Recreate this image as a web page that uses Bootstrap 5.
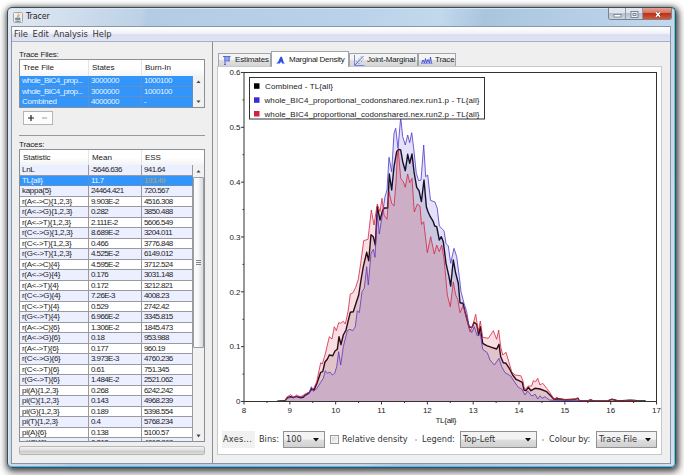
<!DOCTYPE html>
<html lang="en">
<head>
  <meta charset="utf-8">
  <title>Tracer</title>
  <meta name="viewport" content="width=device-width, initial-scale=1">
  <link href="https://cdn.jsdelivr.net/npm/bootstrap@5.3.0/dist/css/bootstrap.min.css" rel="stylesheet">

  <style>
    body {
      width: 684px;
      height: 475px;
      background: #fff;
      font-family: "Liberation Sans", Arial, sans-serif;
      font-size: 8px;
      line-height: 1;
      color: #222;
      letter-spacing: -.2px;
      white-space: nowrap;
    }
    .ui-font {
      font-family: "DejaVu Sans", Verdana, sans-serif;
      font-size: 8.2px;
      letter-spacing: 0;
      color: #333;
    }
    /* window frame */
    .win {
      width: 669px;
      height: 461px;
      margin: 7px 0 0 7px;
      padding: 0 4px 3px 3px;
      border: 1px solid #3f4c56;
      border-bottom-color: #28586f;
      border-radius: 5px;
      background: linear-gradient(100deg, #e2e9f1 0, #c9d9ea 12%, #bdd1e7 18%, #b3cbe3 19%, #b9d1e9 45%, #c2d8ec 58%, #a9c5de 64%, #b9d1e8 80%, #cfe0ee 100%);
      box-shadow: inset -1px 0 0 #55cbe0, inset 0 -1px 0 #62b4dc, inset 1px 0 0 #d9e8f3, inset 0 1px 0 #d6e5f3, 1px 1px 5px 1px rgba(0,0,0,.5), 1px 3px 8px 2px rgba(0,0,0,.45);
    }
    .title-row { height: 18px; padding-left: 2px; }
    .title-row .caption { font-family: "DejaVu Sans", sans-serif; font-size: 8px; margin-left: 3px; letter-spacing: -.15px; color: #222; }
    .win-btns {
      height: 12px;
      width: 64px;
      margin-right: -1px;
      border: 1px solid #77838f;
      border-top: 0;
      border-radius: 0 0 3px 3px;
      overflow: hidden;
    }
    .win-btns div { width: 17px; background: linear-gradient(#dfe6ee 0 45%, #b4c1cf 50%, #cad6e2); border-right: 1px solid #8d99a6; }
    .win-btns .x-btn { width: 28px; border: 0; background: linear-gradient(#e3a294 0, #d27562 45%, #bd3117 50%, #d4583c); }
    .client { height: 438px; border: 1px solid #8b94a2; background: #efefef; }
    .menu-row {
      height: 15px;
      flex: none;
      padding-left: 2px;
      font-size: 8.4px;
      background: linear-gradient(#fff 0, #f1f3fa 45%, #dadff0 55%, #dfe3f3 100%);
      border-bottom: 1px solid #a9afc0;
    }
    .menu-row span { margin-right: 4.6px; }
    .content-row { height: 421px; }

    /* left side */
    .side { width: 201px; padding-left: 7px; border-right: 1px solid #8c8c8c; }
    .side .lbl { height: 9px; line-height: 9px; letter-spacing: -.15px; }
    .grid-box { width: 186px; border: 1px solid #8b8e94; background: #efefef; overflow: hidden; }
    .files-box { height: 49px; }
    .traces-box { height: 293px; }
    .grid-head { background: linear-gradient(#fff 50%, #f3f4f6); letter-spacing: -.05px; }
    .files-box .grid-head { height: 16px; }
    .traces-box .grid-head { height: 15px; }
    .grid-head div { padding-left: 3px; border-right: 1px solid #e2e4e8; }
    .c1 { width: 69px; }
    .c2 { width: 53px; }
    .c3 { width: 51px; }
    .grid-rows { width: 173px; overflow: hidden; }
    .grid-row { height: 10.52px; background: #fff; border-bottom: 1px solid #9a9a9e; }
    .grid-row div { padding-left: 2px; border-right: 1px solid #9a9a9e; line-height: 9.8px; letter-spacing: -.58px; color: #1c1c1c; }
    .grid-row .c1 { letter-spacing: -.3px; }
    .grid-row.odd-row { background: #ecefff; }
    .grid-row.sel { background: #3295fb; border-bottom-color: #5f91c8; }
    .grid-row.sel div { color: #e9f4ff; border-right-color: #5f91c8; }
    .files-box .grid-row div { letter-spacing: -.45px; }
    .files-box .grid-row .c1 { letter-spacing: -.55px; }
    .files-box .grid-row:last-child .c1 { letter-spacing: -.2px; }
    .grid-row.sel .warn { color: #b9a45c; }
    .bar-col { width: 11px; background: #f1f1f1; }
    .bar-thumb { height: 171px; margin-top: 3px; border: 1px solid #9b9ea2; border-radius: 1px; background: linear-gradient(90deg, #fafafa 40%, #d9dadc); }
    .pm { width: 30px; height: 14px; margin: 3px 0 0 4px; border: 1px solid #b4b4b4; background: #fdfdfd; }
    .rule { width: 186px; height: 1px; margin: 10px 0 4px; background: #999; }
    .progress-strip { width: 186px; height: 9px; margin-top: 4px; border: 1px solid #b4b6b8; border-radius: 2px; background: linear-gradient(#f4f4f4, #dcdcdc 50%, #c6c7c8 60%, #e0e0e0); }

    /* right side */
    .main { padding-left: 4px; }
    .tab-row { height: 24px; padding-left: 1px; }
    .tab-x { height: 13px; border: 1px solid #a2a4a8; border-bottom: 0; background: linear-gradient(#f4f4f4 45%, #dedfe0 55%, #d4d5d6); letter-spacing: -.14px; }
    .tab-x.on { height: 16px; background: #fff; margin-bottom: -1px; }
    .tab-x.on .cap { letter-spacing: -.26px; margin-left: -1px; }
    .panel { width: 445px; height: 389px; border: 1px solid #c6c8ca; background: #fff; }
    .plot { display: block; letter-spacing: 0; }
    .ctl { height: 17px; margin: 3px 0 0 4px; }
    .combo { height: 17px; border: 1px solid #8f9194; background: linear-gradient(#f3f3f3 48%, #dedede 52%, #d0d0d0); padding: 0 5px 0 2px; }
    .axes-btn { width: 33px; height: 17px; background: #f1f1f1; padding-left: 1px; letter-spacing: .25px; }
    .chk { width: 9px; height: 9px; margin: 0 3px 0 5px; border: 1px solid #999; background: linear-gradient(135deg, #cfcfcf, #fff); box-shadow: inset 0 0 0 1px #f4f4f4; }
    .dot { width: 2px; height: 2px; background: #ccc; }
    .w-bins { width: 42px; }
    .w-legend { width: 77px; margin-right: 5px; }
    .w-colour { width: 61px; }
    .t-bins { width: 24px; }
    .t-density { width: 73px; }
    .t-legend { width: 43px; padding-left: 5px; }
    .t-colour { width: 52px; padding-left: 5px; }
    .tab-1 { width: 53px; }
    .tab-2 { width: 78px; }
    .tab-3 { width: 69px; }
    .tab-4 { width: 38px; }
  </style>
</head>

<body class="overflow-hidden">
  <div class="win">
    <!-- title bar -->
    <div class="title-row d-flex justify-content-between">
      <div class="d-flex align-items-center">
        <svg width="10" height="11" viewBox="0 0 10 11">
          <rect x=".5" y=".5" width="9" height="10" rx="1" fill="#f2f0ea" stroke="#a5a8ab"/>
          <path d="M5.2 1.5c1.4 1.2-1.8 2-.3 3.8M6.6 3c-1 .6-1 1.2-.4 2" fill="none" stroke="#d98742" stroke-width=".9"/>
          <path d="M2.6 6h4v1.6q-2 1-4 0zM6.6 6.3q1.4 0 0 1.2M2 9.1q3 .8 6-.1" fill="#8ca0b8" stroke="#5a7596" stroke-width=".7"/>
        </svg>
        <span class="caption">Tracer</span>
      </div>
      <div class="win-btns d-flex">
        <div><svg class="d-block" width="16" height="12"><rect x="5" y="6.5" width="7" height="2.5" fill="#fff" stroke="#626c78" stroke-width=".7"/></svg></div>
        <div><svg class="d-block" width="16" height="12"><rect x="5" y="3.5" width="7" height="6" fill="#eef" stroke="#626c78" stroke-width=".8"/><rect x="7" y="5.5" width="3" height="2" fill="none" stroke="#626c78" stroke-width=".8"/></svg></div>
        <div class="x-btn"><svg class="d-block" width="28" height="12"><path d="M13 4.3l4 4.4M17 4.3l-4 4.4" stroke="#7b2a20" stroke-width="2.6"/><path d="M13 4.3l4 4.4M17 4.3l-4 4.4" stroke="#fff" stroke-width="1.6"/></svg></div>
      </div>
    </div>

    <div class="client">
      <div class="menu-row ui-font d-flex align-items-center">
        <span>File</span><span>Edit</span><span>Analysis</span><span>Help</span>
      </div>

      <div class="content-row d-flex">
        <!-- trace files and statistics -->
        <div class="side pt-2">
          <div class="lbl">Trace Files:</div>
          <div class="grid-box files-box">
            <div class="grid-head d-flex">
              <div class="c1 d-flex align-items-center">Tree File</div>
              <div class="c2 d-flex align-items-center">States</div>
              <div class="c3 d-flex align-items-center border-0">Burn-In</div>
            </div>
            <div class="d-flex">
              <div class="grid-rows" id="files"></div>
              <div class="bar-col d-flex flex-column justify-content-between align-items-center pt-1 pb-1">
                <svg width="5" height="4"><path d="M.5 3L2.5 .5L4.5 3z" fill="#444"/></svg>
                <svg width="5" height="4"><path d="M.5 .5L2.5 3L4.5 .5z" fill="#444"/></svg>
              </div>
            </div>
          </div>
          <div class="pm d-flex align-items-center justify-content-around">
            <svg width="6" height="6"><path d="M0 3h6M3 0v6" stroke="#222" stroke-width="1.2"/></svg>
            <svg width="6" height="6"><path d="M0 3h5" stroke="#999" stroke-width="1"/></svg>
          </div>
          <div class="rule"></div>
          <div class="lbl">Traces:</div>
          <div class="grid-box traces-box">
            <div class="grid-head d-flex">
              <div class="c1 d-flex align-items-center">Statistic</div>
              <div class="c2 d-flex align-items-center">Mean</div>
              <div class="c3 d-flex align-items-center border-0">ESS</div>
            </div>
            <div class="d-flex">
              <div class="grid-rows" id="traces"></div>
              <div class="bar-col">
                <svg class="d-block mx-auto mt-1" width="5" height="5"><path d="M.5 3.5L2.5 1L4.5 3.5z" fill="#444"/></svg>
                <div class="bar-thumb d-flex align-items-center justify-content-center">
                  <svg width="5" height="6"><path d="M0 .5h5M0 2.5h5M0 4.5h5" stroke="#777" stroke-width=".9"/></svg>
                </div>
                <svg class="d-block mx-auto" width="5" height="92"><path d="M.5 86.500L2.5 89.500L4.5 86.500z" fill="#444"/></svg>
              </div>
            </div>
          </div>
          <div class="progress-strip"></div>
        </div>

        <!-- tabs and chart -->
        <div class="main">
          <div class="tab-row d-flex align-items-end">
            <div class="tab-x tab-1 d-flex align-items-center">
              <svg class="ms-1 me-1" width="8" height="11" viewBox="0 0 8 11"><path d="M0 1.500h7.500M2 1.500v8M1 9.500h2M6 1.500v5" fill="none" stroke="#5265d8" stroke-width="1"/><rect x="2" y="1.500" width="4" height="4.500" fill="#93a4f0" stroke="#5265d8" stroke-width=".7"/></svg>
              <span class="cap">Estimates</span>
            </div>
            <div class="tab-x on tab-2 d-flex align-items-center">
              <svg class="ms-1 me-1" width="10" height="8" viewBox="0 0 10 8"><path d="M0 7.5Q2.2 7 3 4T5 .5T7 4T10 7.5H6.2L5 5.5L3.8 7.5z" fill="#2b50e4"/></svg>
              <span class="cap">Marginal Density</span>
            </div>
            <div class="tab-x tab-3 d-flex align-items-center">
              <svg class="ms-1" width="13" height="11" viewBox="0 0 13 11"><path d="M.5 0v10.500h10" fill="none" stroke="#7586e4"/><path d="M1 10L9.500 1" stroke="#4b60d8" stroke-width=".9"/><path d="M2.500 6.500h1M4.500 4h1M6.500 2h1M4.500 8.500h1M7 6.500h1M8.500 4h1" stroke="#7c8ce6" stroke-width="1"/></svg>
              <span class="cap">Joint-Marginal</span>
            </div>
            <div class="tab-x tab-4 d-flex align-items-center">
              <svg width="16" height="10" viewBox="0 0 16 10"><path d="M2.500 8.500L4 5L5.500 8L6.500 3.500L7.500 8L9 4.500L10.500 8L11.500 2L12.500 8.500" fill="none" stroke="#3a48d4" stroke-width=".9"/><path d="M2 8.500h11.500" stroke="#7c88e8" stroke-width=".8"/></svg>
              <span class="cap">Trace</span>
            </div>
          </div>

          <div class="panel">
            <svg class="plot" width="443" height="361" viewBox="218 67 443 361" font-family="Liberation Sans, Arial, sans-serif" font-size="8" fill="#222">
              <g id="curves" stroke-linejoin="round"></g>
              <rect x="244" y="72.500" width="412.500" height="329" fill="none" stroke="#333"/>
              <g id="axes"></g>
              <text x="446" y="423" text-anchor="middle" textLength="21">TL{all}</text>
              <!-- legend -->
              <rect x="249.500" y="77.500" width="235" height="41.500" fill="#fff" stroke="#333"/>
              <rect x="254" y="83.300" width="5.500" height="5.500" fill="#000"/>
              <rect x="254" y="97.300" width="5.500" height="5.500" fill="#3b2bd2"/>
              <rect x="254" y="111" width="5.500" height="5.500" fill="#d2213d"/>
              <text x="265" y="88.800" textLength="68">Combined - TL{all}</text>
              <text x="264.500" y="102.800" textLength="215">whole_BIC4_proportional_codonshared.nex.run1.p - TL{all}</text>
              <text x="264.500" y="116.500" textLength="215">whole_BIC4_proportional_codonshared.nex.run2.p - TL{all}</text>
            </svg>

            <div class="ctl ui-font d-flex align-items-center">
              <div class="axes-btn d-flex align-items-center me-1">Axes...</div>
              <div class="t-bins">Bins:</div>
              <div class="combo w-bins d-flex align-items-center justify-content-between">100 <svg width="6" height="4"><path d="M0 0h6L3 3.500z" fill="#111"/></svg></div>
              <div class="chk"></div>
              <div class="t-density">Relative density</div>
              <div class="dot"></div>
              <div class="t-legend">Legend:</div>
              <div class="combo w-legend d-flex align-items-center justify-content-between">Top-Left <svg width="6" height="4"><path d="M0 0h6L3 3.500z" fill="#111"/></svg></div>
              <div class="dot"></div>
              <div class="t-colour">Colour by:</div>
              <div class="combo w-colour d-flex align-items-center justify-content-between">Trace File <svg width="6" height="4"><path d="M0 0h6L3 3.500z" fill="#111"/></svg></div>
            </div>
          </div>
        </div>
      </div>
    </div>
  </div>

  <script src="https://cdn.jsdelivr.net/npm/bootstrap@5.3.0/dist/js/bootstrap.bundle.min.js"></script>
  <script>
    const files = [
      ["whole_BIC4_prop...", "3000000", "1000100"],
      ["whole_BIC4_prop...", "3000000", "1000100"],
      ["Combined", "4000000", "-"]
    ];
    const traces = [
      ["LnL", "-5646.636", "941.64"], ["TL{all}", "11.7", "193.49"], ["kappa{5}", "24464.421", "720.567"],
      ["r(A<->C){1,2,3}", "9.903E-2", "4516.308"], ["r(A<->G){1,2,3}", "0.282", "3850.488"],
      ["r(A<->T){1,2,3}", "2.111E-2", "5606.549"], ["r(C<->G){1,2,3}", "8.689E-2", "3204.011"],
      ["r(C<->T){1,2,3}", "0.466", "3776.848"], ["r(G<->T){1,2,3}", "4.525E-2", "6149.012"],
      ["r(A<->C){4}", "4.595E-2", "3712.524"], ["r(A<->G){4}", "0.176", "3031.148"],
      ["r(A<->T){4}", "0.172", "3212.821"], ["r(C<->G){4}", "7.26E-3", "4008.23"],
      ["r(C<->T){4}", "0.529", "2742.42"], ["r(G<->T){4}", "6.966E-2", "3345.815"],
      ["r(A<->C){6}", "1.306E-2", "1845.473"], ["r(A<->G){6}", "0.18", "953.988"],
      ["r(A<->T){6}", "0.177", "960.19"], ["r(C<->G){6}", "3.973E-3", "4760.236"],
      ["r(C<->T){6}", "0.61", "751.345"], ["r(G<->T){6}", "1.484E-2", "2521.062"],
      ["pi(A){1,2,3}", "0.268", "6242.242"], ["pi(C){1,2,3}", "0.143", "4968.239"],
      ["pi(G){1,2,3}", "0.189", "5398.554"], ["pi(T){1,2,3}", "0.4", "5768.234"],
      ["pi(A){6}", "0.138", "5100.57"], ["pi(C){6}", "0.313", "4817.868"]
    ];

    function fillRows(id, rows, isSelected) {
      const box = document.getElementById(id);
      rows.forEach((r, i) => {
        const row = document.createElement("div");
        row.className = "grid-row d-flex" + (isSelected(i) ? " sel" : i % 2 == 0 ? " odd-row" : "");
        r.forEach((value, c) => {
          const cell = document.createElement("div");
          cell.className = "c" + (c + 1) + (value == "193.49" ? " warn" : "");
          cell.textContent = value;
          row.appendChild(cell);
        });
        box.appendChild(row);
      });
    }
    fillRows("files", files, () => true);
    fillRows("traces", traces, i => i == 1);

    // density curves, in plot coordinates
    const tail = " 558.3,398.7 565,399.7 575,399.3 578,398.2 579.3,400.7 588.3,400.7 590.7,399.8 593.3,401 608.3,400.7 611.7,399.3 615.7,400.3 618.3,401 630,400.3 635,400.5 636.7,401";
    const combined = "277.3,401.3 285,400.7 287.3,397.7 290.7,396.7 293.3,397.7 296,396.3 300,397.7 303.3,397.3 305,395.3 309.3,392.7 311.3,388.7 314,390 316.7,384 320.7,372.3 322.7,371.7 325,362 327.3,359.3 329.3,355 332.7,355.7 335,351 337.3,349.3 339,336.7 341,344.7 343.3,335 346,330 348,321.7 350.3,312.3 353.3,311.7 356,303.3 358.7,295 361,280 363.3,266.7 366.7,252.3 368.7,260.7 371,234.7 373.3,236.7 375.3,245 377.3,206.7 380,220 382.7,210 384.3,208 387.7,208 389.3,174 391.7,190 394,166.7 396.7,151.7 398.7,149.3 400.7,150 402.7,161.7 405.3,170.7 407.7,154.3 409.7,163.3 412,154 414,171.7 416.7,187.3 419,190.7 421.4,201.5 424,180 426.4,207 428,211.7 430.3,216.7 433.3,221.7 434.7,226 436.7,226.7 439.3,240 441.3,236.7 443.3,241.7 446,263.3 449,276.7 450.7,286 453.3,260 455.7,273.3 458.3,283.3 460,302.7 463,303.3 465,311.7 467.7,321.7 469.3,327.3 472.3,326.9 474,322.3 476.7,324.3 478.7,335 480.3,326.7 482.7,343.3 486.7,345.7 491.7,347.3 496.7,349 499,344.3 500.7,356.7 503.3,362.7 506,363.3 509.3,368.3 512.7,375 516,379.3 519,380.7 522.3,382.3 524,390 526,390.7 528.3,387.3 531,390.7 535,388.3 540,389 546.7,391.7 551.7,396.7 554,399.3" + tail + " 645.7,401";
    const run1 = "285,400.9 287.3,398 296,396.700 305,396 309.3,393.3 311.3,386.7 313.3,391.3 316.7,388.7 320.7,382.3 323.3,378.3 325.3,370.7 327.3,373.3 330,372 332.3,375 334.7,373.3 336.7,366.7 338.7,351.7 340.7,365 343.3,346.7 347.3,330.7 350,329.3 352.7,330.7 355.3,326.7 357.3,310.7 359.3,312.7 362,291.7 364.3,288.3 366.7,266.7 368.3,285 371,253.3 373.3,249.3 375,257.3 377.3,213 379.3,234 382,216.7 385,196.7 387,190 389,157.3 391.7,171.7 394,133.3 395.7,128.3 398,148.3 400.7,117.3 402.7,136.7 405.3,145 407.7,135 409.7,142.7 411.7,132.7 413.7,148.3 416.3,173.3 418.7,180.7 421,180 423.7,145 425.7,176.7 427.7,175 430.5,200.3 434.9,202 437.3,208.3 439.3,226 444,230.7 446,243.3 448.3,246 450.7,263.3 454,248.3 456.7,256.7 459.3,276.7 461,291.7 464,303.3 466.7,311.7 469.3,328 471.7,332.7 474.3,326.7 477.3,336 480.3,333.3 482.7,349.3 487.3,352.7 490,360 494.3,365 499,358.3 501.7,366.7 505,372.7 510.7,376 515,382.7 518.3,387.3 521.7,389 525,395 527.7,391 531.7,396 535.3,394.3 537.7,399 540,395.7 542,398.3 545,396.7 549.3,400 554,400.3 590,400.8";
    const run2 = "285,400.7 287.3,396.7 290.7,394.7 294,397.3 296.7,395 300.7,397.3 305,394 309.3,392 313.3,389.3 316.7,381.7 320.7,362.7 322.3,364 325,355 329.3,336.7 332,339 334.3,326.7 336.3,330.7 338.7,322.7 340.7,323.3 343.3,321.3 345.3,324 348,311.7 350.3,294 353,292.7 355.7,287.3 358.3,279.3 360.7,263.3 363.7,240.7 368,239.3 371.3,210 374,225 377.3,204 380,211.7 382,198.3 384,215 387,219.3 389,191.7 391.7,203.3 394,206 396,183.3 397.3,156.7 398.3,150 400.7,178.3 403.3,181.7 405.3,187.3 407.7,174 409.7,182.7 412,178.3 414.3,212 417.3,204 420,206 421.5,224.500 423.7,221.7 427.3,252.7 430.7,236.7 434.3,254 436.7,245 439.3,251.7 441.7,245 444,258.3 447.3,295 450.3,306.7 453.3,282 455.7,295 457.7,299.3 460,312.7 463,306 465,311.7 467.7,323 470,332 472.7,326 475.7,314.3 478.3,331.7 480.3,321 482.7,337.3 488.3,338.3 493.3,330.7 496.7,339.3 498.7,330 500.7,346.7 502.7,355 506,352.3 508.3,360 511.7,371.7 515,375 520.7,375.7 522.7,380 524.7,390 528.3,386 531.7,386 533.3,380.7 535.7,381.7 537.7,378.3 540,385 542.7,383.3 546.7,388.3 550,392.7 554,399.3 557,397" + tail;

    function curve(points, rgb, alpha, width) {
      return `<polygon points="277.3,401.3 ${points} 645,401.3" fill="rgb(${rgb})" fill-opacity="${alpha}"/>` +
             `<polyline points="${points}" fill="none" stroke="rgb(${rgb})" stroke-width="${width}"/>`;
    }
    document.getElementById("curves").innerHTML =
      curve(combined, "16,8,16", .12, 1.4) + curve(run1, "75,55,205", .15, .8) + curve(run2, "215,35,65", .15, .8);

    // ticks and numbers on both axes
    let axes = "";
    for (let i = 0; i <= 18; i++) {
      const x = 244 + i * 22.92;
      axes += `<path d="M${x} 401.500v${i % 2 ? 1.5 : 3}" stroke="#333"/>`;
      if (i % 2 == 0) axes += `<text x="${x}" y="413" text-anchor="middle">${8 + i / 2}</text>`;
    }
    for (let i = 0; i <= 12; i++) {
      const y = 401.5 - i * 27.42;
      axes += `<path d="M244 ${y}h${i % 2 ? -1.5 : -3}" stroke="#333"/>`;
      if (i % 2 == 0) axes += `<text x="240.500" y="${y + 2.8}" text-anchor="end">${i ? "0." + i / 2 : 0}</text>`;
    }
    document.getElementById("axes").innerHTML = axes;
  </script>
</body>
</html>
